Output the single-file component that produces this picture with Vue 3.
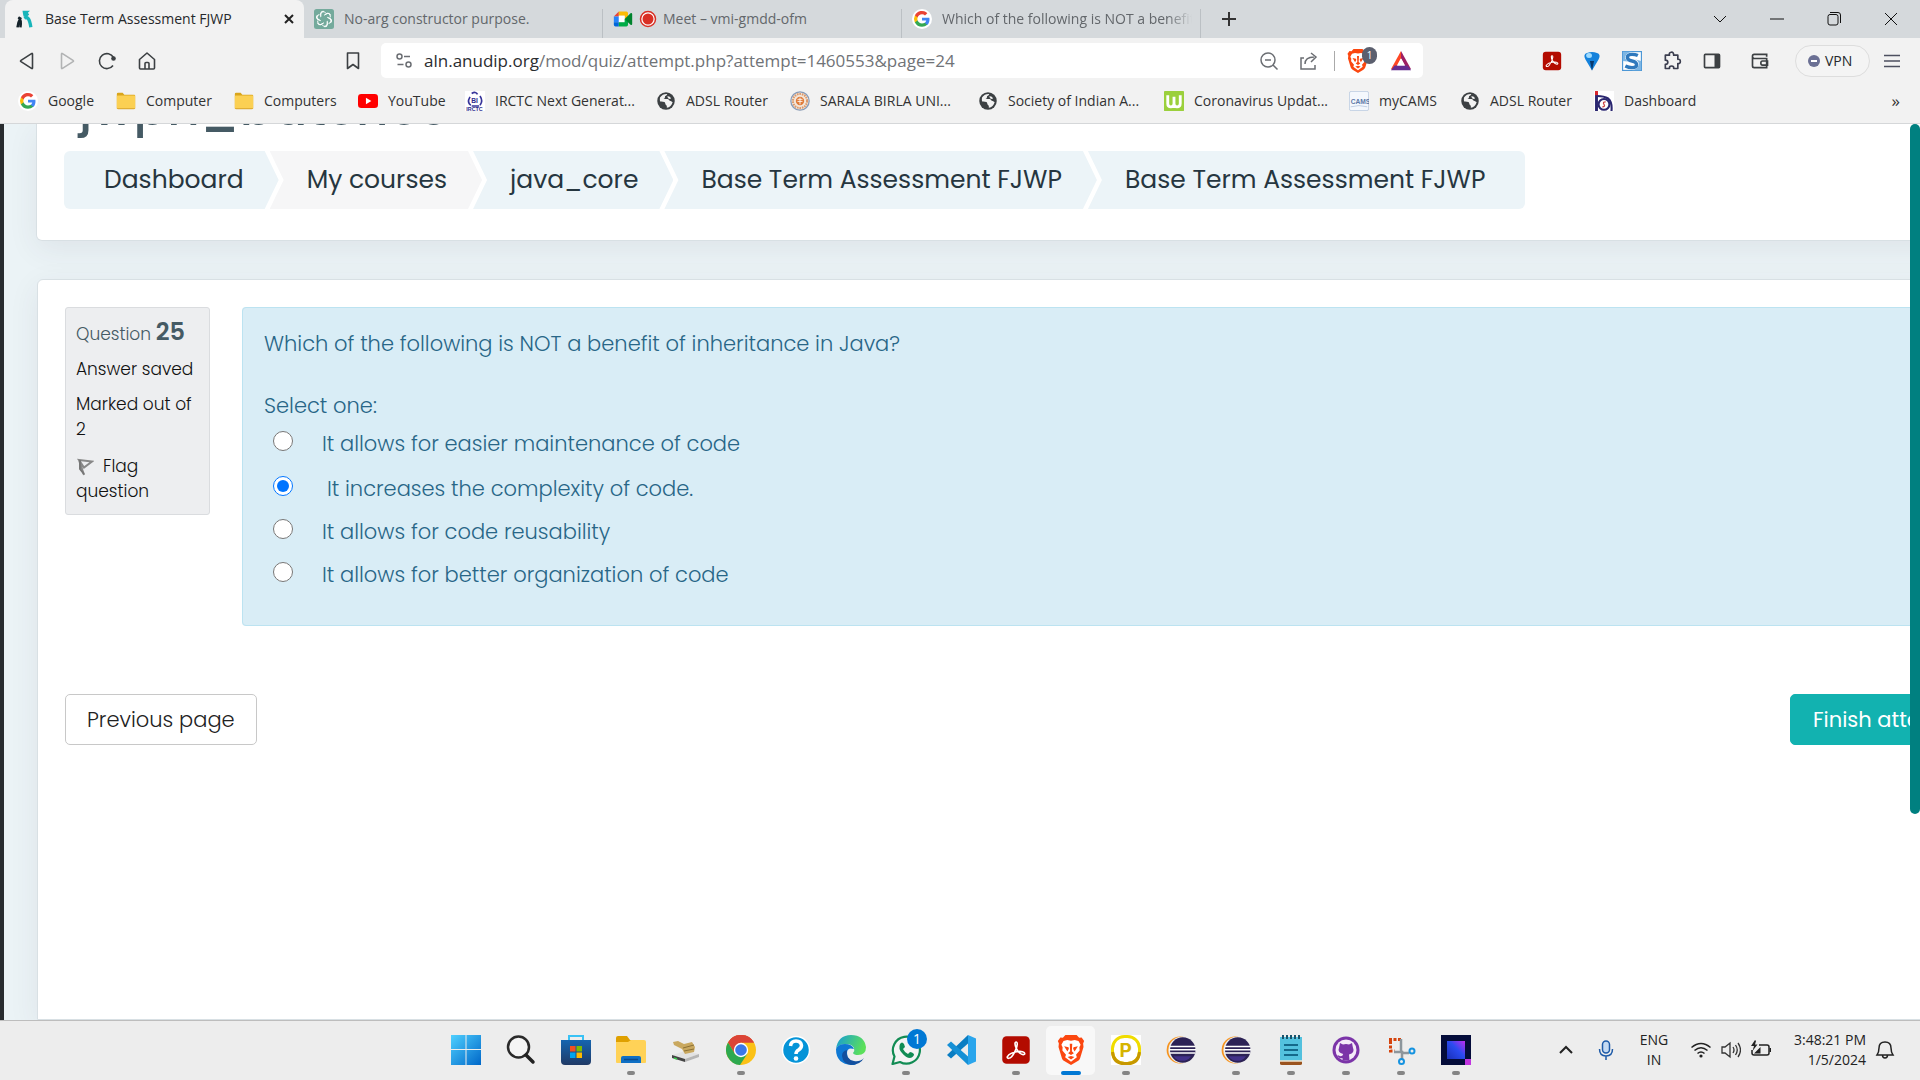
<script setup>
import { ref } from 'vue'

const google = '<circle cx="12" cy="12" r="12" fill="#fff"/><path d="M21 12.2c0-.7-.1-1.2-.2-1.8H12v3.500h5.100c-.2 1.200-.9 2.200-1.900 2.900v2.400h3.100C20.100 17.500 21 15.100 21 12.200z" fill="#4285f4"/><path d="M12 21.300c2.600 0 4.700-.9 6.300-2.300l-3.100-2.400c-.8.6-1.900.9-3.200.9-2.500 0-4.600-1.700-5.300-3.900H3.500v2.500C5 19.200 8.300 21.300 12 21.300z" fill="#34a853"/><path d="M6.700 13.600a5.600 5.600 0 0 1 0-3.500V7.600H3.500a9.400 9.400 0 0 0 0 8.500z" fill="#fbbc05"/><path d="M12 6.300c1.400 0 2.700.5 3.600 1.400l2.800-2.700A9.400 9.400 0 0 0 3.500 7.600l3.200 2.500C7.400 7.900 9.500 6.300 12 6.300z" fill="#ea4335"/>'
const folder = '<path d="M1 3.500Q1 2 2.500 2H8l2 2.500h12q1 0 1 1V21H1z" fill="#d9a51c"/><path d="M1 6.500Q1 5.500 2 5.500h20q1 0 1 1v13.500q0 1.500-1.500 1.500h-19Q1 21.500 1 20z" fill="#fbd053"/><path d="M1 20.500h22q-.3 1.500-1.800 1.500H2.800Q1.200 22 1 20.500z" fill="#e0ae35"/>'
const globe = '<circle cx="12" cy="12" r="10.500" fill="#3c4043"/><path d="M5 7.500C7 4.500 10 3.200 13.500 3.500c-.5 1.500-1 2-2.500 2.500-.5 2 0 3-2 3.500l5 .2c2 .3 1.500 2.300 3.500 2.300 1.500 0 1 1.500 2.500 1.200-1 4-3.500 6.300-7 7 0-2 .3-2.500-1-3.500s-.5-3-2-3.500-3-.7-5-.5C4.500 11 4.500 9 5 7.500z" fill="#f2f2f2"/><path d="M13.500 6.500c2-.5 3.500.5 4.500 2.500-1.500 1-3.500.5-4.500-2.500z" fill="#f2f2f2"/>'
const acrobat = '<rect x="1" y="1" width="22" height="22" rx="3.500" fill="#b30b00"/><path d="M5 17.500c1.500-2.500 6-4 9-4.300 2-.2 5 .2 5 1.600s-2.200 1.200-4-.4C13 12.800 11.200 9 11.200 7c0-1.900 1.900-1.900 1.800.3-.1 3-2.700 8-4.500 10.100-1.400 1.600-3.700 1.700-3.500.1z" fill="none" stroke="#fff" stroke-width="1.300"/>'
const brave = '<path d="M7.500 0h9l2 2.200 2-.2 2 2.800-.8 2L22 9.500l-2.600 8.600c-.3 1.200-1 2-2 2.600L12 24l-5.400-3.300c-1-.6-1.700-1.400-2-2.600L2 9.500l.3-2.700-.8-2L3.500 2l2 .2z" fill="#fb4710"/><path d="M12 4.500l3-.5 3 .8 1.700 3-1 2 .2 2.500-2.900 3.400.7 2L12 21.300l-4.700-3.600.7-2-2.900-3.400.2-2.500-1-2L6 4.800 9 4z" fill="#fff"/><path d="M6.500 9l3.500.8.3 1.200-1.200 2.200zM17.500 9l-3.500.8-.3 1.200 1.200 2.200zM11 7h2l-.3 6 1.600 1.500L12 16l-2.300-1.500 1.600-1.500zM9.300 17.500l2.700-.8 2.700.8-2.700 2z" fill="#fb4710"/>'
const eclipse = '<circle cx="11.300" cy="12" r="10.800" fill="#f7941e"/><circle cx="12.500" cy="12" r="10.600" fill="#ededed"/><circle cx="13.400" cy="12" r="10.200" fill="#2c2255"/><path d="M6 17a8.500 8.500 0 0 0 14 0z" fill="#423189"/><path d="M3.200 9.200h20.200M2.600 11.800h21.400M3.200 14.400h20.200" stroke="#fff" stroke-width="1.200"/>'
const knot = [0, 60, 120, 180, 240, 300].map(a => `<path d="M8 8V6.500q0-3 3-3.200 1.500 0 3 1.200M12 7.500l3.800-2.200q3-1 4 2" transform="rotate(${a} 12 12)"/>`).join('')

const tabs = [
  { title: 'Base Term Assessment FJWP', active: true, icon: '<path d="M4 10q4 3 2.500 12M7 10q-3 5-4 12" stroke="#15232b" stroke-width="3" fill="none"/><path d="M11 11q6-4 8 11" stroke="#18b5ba" stroke-width="4" fill="none"/><path d="M9 2h9l-2.500 2.500L17 7q-3 3-7 1z" fill="#18b5ba"/>' },
  { title: 'No-arg constructor purpose.', icon: '<rect width="24" height="24" rx="3" fill="#74aa9c"/><g fill="none" stroke="#fff" stroke-width="1.200">' + knot + '</g>' },
  { title: 'Meet – vmi-gmdd-ofm', recording: true, icon: '<path d="M1 9l6-6v6z" fill="#ea4335"/><path d="M7 3h9q2 0 2 2v7h-4V8H7z" fill="#fbbc04"/><path d="M1 9h6v7H1z" fill="#2684fc"/><path d="M1 16h6v5H3q-2 0-2-2z" fill="#0066da"/><path d="M7 8h7v8H7z" fill="#fff"/><path d="M7 16h7v-4h4v7q0 2-2 2H7z" fill="#00ac47"/><path d="M14 12l7-7q2-.8 2 1v12q0 1.800-2 1z" fill="#00832d"/>' },
  { title: 'Which of the following is NOT a benefit of inheritance in Java?', fade: true, icon: google }
]

const bookmarks = [
  { label: 'Google', width: 98, icon: google },
  { label: 'Computer', width: 118, icon: folder },
  { label: 'Computers', width: 124, icon: folder },
  { label: 'YouTube', width: 107, icon: '<rect y="3.500" width="24" height="17" rx="4" fill="#f00"/><path d="M9.500 8v8l6.500-4z" fill="#fff"/>' },
  { label: 'IRCTC Next Generat...', width: 191, icon: '<rect width="24" height="24" fill="#fff"/><path d="M8 3q5-3 7 1M6 7q-4 7 1 10M18 6q4 6 0 11M8 18h9" stroke="#37349a" stroke-width="2" fill="none"/><text x="7.500" y="14" font-size="8" font-weight="700" font-family="Liberation Sans" fill="#2c2a8c">BI</text><text x="1.500" y="23.500" font-size="6.500" font-weight="700" font-family="Liberation Sans" fill="#2c2a8c">IRCTC</text>' },
  { label: 'ADSL Router', width: 134, icon: globe },
  { label: 'SARALA BIRLA UNI...', width: 188, icon: '<circle cx="12" cy="12" r="11" fill="#f2e7dc" stroke="#879bb8" stroke-width="1.500"/><circle cx="12" cy="12" r="8.500" fill="none" stroke="#dd9a6c" stroke-width="2.500" stroke-dasharray="2 1"/><circle cx="12" cy="12" r="5" fill="#e07b39"/><path d="M9 10h6M9 12.500h6M12 8v8" stroke="#fff" stroke-width="1"/>' },
  { label: 'Society of Indian A...', width: 186, icon: globe },
  { label: 'Coronavirus Updat...', width: 185, icon: '<rect width="24" height="24" rx="1" fill="#9bd03c"/><path d="M4.500 5v10q0 4 3.700 4T12 15V7v8q0 4 3.700 4t3.800-4V5" fill="none" stroke="#fff" stroke-width="3.400"/>' },
  { label: 'myCAMS', width: 111, icon: '<rect x=".5" y=".5" width="23" height="23" rx="2" fill="#f4f8fd" stroke="#bccbe0"/><text x="2" y="16" font-size="8" font-weight="700" font-family="Liberation Sans" fill="#5d79a8">CAMS</text><path d="M2 19q10-3 20 0" stroke="#b8c8e0" fill="none"/>' },
  { label: 'ADSL Router', width: 134, icon: globe },
  { label: 'Dashboard', width: 130, icon: '<rect width="24" height="24" fill="#fff"/><path d="M3 2v22" stroke="#2a2670" stroke-width="3.500"/><path d="M3 0v5" stroke="#d8232a" stroke-width="3.500"/><path d="M4 6q8 0 13 3 5 4 4 15" fill="none" stroke="#2a2670" stroke-width="2.500"/><circle cx="12" cy="16" r="6.500" fill="none" stroke="#2a2670" stroke-width="2.500"/><path d="M14 13q-4 0-2 3t-2 3" stroke="#c44" stroke-width="1.500" fill="none"/>' }
]

const extensions = [
  { name: 'Acrobat', icon: acrobat },
  { name: 'Balloon', icon: '<path d="M12 23.500L4 10Q1 4 6 2.500q6-2.500 12 0 5 1.500 2 7.500z" fill="#1482dc"/><path d="M12 23.500L9.500 12h5z" fill="#06386e"/><ellipse cx="8.500" cy="5.500" rx="3.500" ry="3" fill="#9fdcff"/>' },
  { name: 'Scribe', icon: '<rect x=".7" y=".7" width="22.600" height="22.600" fill="#fff" stroke="#4c97d6" stroke-width="1.400"/><path d="M23 12v11H12q9-2 8-9-1-3-5-4zM1 12V1h11Q3 3 4 9q1 3 5 4z" fill="#7db6e4"/><path d="M19 5.500Q16 4 12 4 6.500 4 6.500 7.500T12 12t5.500 4.500T12 20q-4 0-8-2" stroke="#2f79bd" stroke-width="4" fill="none"/>' },
  { name: 'Extensions', icon: '<path d="M5 5h4q-1-3 2-3.500T14 5h5v5q3-.5 3 2.500T19 15v6h-5q.5-3-2.500-3T9 21H4v-5q3 0 3-2.500T4 11V5z" fill="none" stroke="#3b3e4f" stroke-width="2" stroke-linejoin="round"/>' },
  { name: 'Sidebar', icon: '<rect x="3" y="4" width="18" height="16" rx="1" fill="none" stroke="#3c4043" stroke-width="2"/><path d="M15 4h6v16h-6z" fill="#3c4043"/>' },
  { name: 'Wallet', icon: '<path d="M20 7V4H5Q3 4 3 6v12q0 2 2 2h15V9H5Q3 9 3 7M21 12h-6q-2 0-2 2.500t2 2.500h6z" fill="none" stroke="#3c4043" stroke-width="2"/>' }
]

const crumbs = ['Dashboard', 'My courses', 'java_core', 'Base Term Assessment FJWP', 'Base Term Assessment FJWP']

const options = [
  'It allows for easier maintenance of code',
  'It increases the complexity of code.',
  'It allows for code reusability',
  'It allows for better organization of code'
]
const answer = ref(1)

const apps = [
  { name: 'Start', icon: '<defs><linearGradient id="win" x1="0" y1="0" x2="1" y2="1"><stop stop-color="#4fd0ff"/><stop offset="1" stop-color="#0067c8"/></linearGradient></defs><path d="M0 0h14.500v14H0zM15.500 0H30v14H15.500zM0 15h14.500v15H0zM15.500 15H30v15H15.500z" fill="url(#win)"/>' },
  { name: 'Search', icon: '<circle cx="12.500" cy="12" r="10.500" fill="#f5f5f5" stroke="#2a2a2a" stroke-width="2.500"/><path d="M20 20l7 7" stroke="#222" stroke-width="3.500" stroke-linecap="round"/>' },
  { name: 'Microsoft Store', icon: '<defs><linearGradient id="st" x1="0" y1="0" x2="0" y2="1"><stop stop-color="#1565b0"/><stop offset="1" stop-color="#203a66"/></linearGradient></defs><path d="M8 6V1h14v5" fill="none" stroke="#39c2f5" stroke-width="2"/><path d="M0 5h30v21q0 4-4 4H4q-4 0-4-4z" fill="url(#st)"/><path d="M9 11h5.500v5.500H9z" fill="#f25022"/><path d="M15.500 11H21v5.500h-5.500z" fill="#7fba00"/><path d="M9 17.500h5.500V23H9z" fill="#00a4ef"/><path d="M15.500 17.500H21V23h-5.500z" fill="#ffb900"/>' },
  { name: 'File Explorer', running: true, icon: '<path d="M0 3q0-2 2-2h9l3 4h14v5H0z" fill="#dfa000"/><path d="M0 7h12l3-2h13q2 0 2 2v20q0 1-1 1H1q-1 0-1-1z" fill="#ffd257"/><path d="M5 28v-5q0-2 2-2h16q2 0 2 2v5z" fill="#0f6fc4"/><path d="M8 24.500h14" stroke="#0a4a8c" stroke-width="1.500"/>' },
  { name: 'Disk Tool', icon: '<path d="M1 20l13-4 14 3-14 5z" fill="#e2e2e2"/><path d="M1 20l13 4v3L1 23z" fill="#444"/><path d="M14 24l14-5v3l-14 5z" fill="#b5b5b5"/><path d="M3 23l3 1" stroke="#35c948" stroke-width="1.500"/><path d="M2 7l5-1 6 3 8-2 3 5-1 5-9 2-3-5-8-4z" fill="#c9a85f"/><path d="M12 13l11-3M13 16l10-2" stroke="#8c7135" stroke-width="1"/>' },
  { name: 'Chrome', running: true, icon: '<circle cx="15" cy="15" r="15" fill="#fbc116"/><path d="M2 7.500A15 15 0 0 1 28 7.500H15z" fill="#db4437"/><path d="M2 7.500a15 15 0 0 1 26 0H15L9 19z" fill="#db4437"/><path d="M2 7.500A15 15 0 0 0 14 30l7.500-11.500L9 19z" fill="#2da94f"/><circle cx="15" cy="15" r="7.200" fill="#fff"/><circle cx="15" cy="15" r="5.800" fill="#3b78e7"/>' },
  { name: 'Get Help', icon: '<circle cx="15" cy="15" r="13.500" fill="#0594d8" stroke="#fff" stroke-width="1.500"/><path d="M9.500 11q.5-5 5.500-5t5.500 4.500q0 2.500-3 4.500-2.500 1.500-2.500 4" stroke="#fff" stroke-width="3.500" fill="none"/><circle cx="15" cy="23.500" r="2.300" fill="#fff"/>' },
  { name: 'Edge', icon: '<defs><linearGradient id="ed" x1="0" y1="0" x2="1" y2=".3"><stop stop-color="#159bd8"/><stop offset="1" stop-color="#5be05a"/></linearGradient></defs><path d="M0 14Q2 0 15 0t15 12q0 8-8 8-4 0-5-2 2-2 1-5-2-4-8-4-8 0-10 5z" fill="url(#ed)"/><path d="M0 14q2-5 9-5 7 0 9 5-7-2-7 4 0 8 9 12Q0 31 0 14z" fill="#0e78d4"/><path d="M11 15q-2 9 7 11 6 1 10-3-4 7-13 7-8-1-9-9 0-5 5-6z" fill="#124f9e"/>' },
  { name: 'WhatsApp', running: true, badge: '1', icon: '<path d="M1.500 29l2-7.500A13.500 13.500 0 1 1 9 27z" fill="#f4f4f4" stroke="#128c54" stroke-width="2.200" stroke-linejoin="round"/><path d="M9 9q2-3 4 0l1 3-2 2q2 4 5 5l2-2q2 0 4 2 0 3-4 4-4 0-8-5-4-4-2-9z" fill="#128c54"/>' },
  { name: 'Visual Studio Code', icon: '<path d="M22 0l8 3.500v23L22 30z" fill="#2aa5ec"/><path d="M22 0v8.500L5 23.500 1 20z" fill="#0a7dc2"/><path d="M22 30v-8.500L5 6.500 1 10z" fill="#1590d6"/>' },
  { name: 'Acrobat', running: true, icon: acrobat, box: 24 },
  { name: 'Brave', active: true, icon: brave, box: 24 },
  { name: 'P', running: true, icon: '<rect width="30" height="30" fill="#fff"/><rect x="1.500" y="1.500" width="27" height="27" rx="12" fill="#fff" stroke="#f0dc00" stroke-width="3"/><path d="M1.500 17q1 11.500 12 11.500h3q11 0 12-11.500" stroke="#c79800" stroke-width="3" fill="none"/><text x="8.500" y="22" font-size="19" font-weight="700" font-family="Inter" fill="#d6b400">P</text>' },
  { name: 'Eclipse', icon: eclipse, box: 24 },
  { name: 'Eclipse Workspace', running: true, icon: eclipse, box: 24 },
  { name: 'Notepad', running: true, icon: '<path d="M4 2h22v24H4z" fill="#53c1de"/><path d="M4 26h22v2.500q0 1.500-2 1.500H6q-2 0-2-1.500z" fill="#9a531e"/><path d="M4 26h22" stroke="#f3e6d2" stroke-width="1.500"/><path d="M7 0v4M11 0v4M15 0v4M19 0v4M23 0v4" stroke="#17536b" stroke-width="2"/><path d="M8 10h14M8 15h14M8 20h14" stroke="#14688a" stroke-width="2"/>' },
  { name: 'GitHub', running: true, icon: '<circle cx="15" cy="15" r="13.500" fill="#7b34a8"/><circle cx="15" cy="15" r="10.500" fill="#f4eaf8"/><path d="M9 8l3 1.500q3-.8 6 0L21 8l.8 4q2.500 6-3.800 7.500l.5 6h-7V23q-4 1-5-3 3 2 5 .5l.7-1.500Q6 17.500 8.200 12z" fill="#7b34a8"/>' },
  { name: 'Snipping Tool', running: true, icon: '<path d="M3 4.500h12M4.500 6v10h4" stroke="#d5430c" stroke-width="3" stroke-dasharray="3 1.500" fill="none"/><path d="M15 4v11q0 3 3 3h5M8 17h8V24" stroke="#8d969c" stroke-width="2.500" fill="none"/><circle cx="26" cy="16" r="2.500" fill="none" stroke="#1593e0" stroke-width="2"/><circle cx="15.500" cy="26.500" r="2.500" fill="none" stroke="#1593e0" stroke-width="2"/>' },
  { name: 'Media', running: true, icon: '<defs><linearGradient id="md" x1="1" y1="0" x2="0" y2="1"><stop stop-color="#c02cf0"/><stop offset=".45" stop-color="#2a4bf0"/><stop offset="1" stop-color="#1a2fb8"/></linearGradient></defs><path d="M0 0h30v30H0z" fill="#040c3a"/><path d="M6 6h18v18H6z" fill="url(#md)"/><path d="M24 24h6v6h-6z" fill="#c135e0"/>' }
]
</script>

<template>
  <div class="desktop">
    <header class="browser">
      <div class="tabstrip">
        <div v-for="t in tabs" :key="t.title" class="tab" :class="{ active: t.active, recording: t.recording }">
          <svg class="i20" viewBox="0 0 24 24" v-html="t.icon" />
          <svg v-if="t.recording" class="i18" viewBox="0 0 18 18"><circle cx="9" cy="9" r="7.500" fill="#fff" stroke="#d93025" stroke-width="1.500" /><circle cx="9" cy="9" r="5.500" fill="#d93025" /></svg>
          <span class="tab-title" :class="{ fade: t.fade }">{{ t.title }}</span>
          <button v-if="t.active" class="plain" aria-label="Close tab"><svg class="i12" viewBox="0 0 12 12"><path d="M2 2l8 8M10 2l-8 8" stroke="#222" stroke-width="2" /></svg></button>
        </div>
        <button class="plain new-tab" aria-label="New tab"><svg class="i16" viewBox="0 0 16 16"><path d="M8 1v14M1 8h14" stroke="#333" stroke-width="2" /></svg></button>
        <div class="window-buttons">
          <button class="plain" aria-label="Search tabs"><svg class="i16" viewBox="0 0 16 16"><path d="M2 5l6 6 6-6" class="line" /></svg></button>
          <button class="plain" aria-label="Minimize"><svg class="i16" viewBox="0 0 16 16"><path d="M1 8h14" class="line" /></svg></button>
          <button class="plain" aria-label="Restore"><svg class="i16" viewBox="0 0 16 16"><rect x="2" y="3.500" width="10" height="10.500" rx="2" class="line" /><path d="M4 1.500h8q2.500 0 2.500 2.500v8" class="line" /></svg></button>
          <button class="plain" aria-label="Close"><svg class="i16" viewBox="0 0 16 16"><path d="M2 2l12 12M14 2L2 14" class="line" /></svg></button>
        </div>
      </div>

      <div class="toolbar">
        <div class="nav">
          <button class="plain" aria-label="Back"><svg class="i20" viewBox="0 0 20 20"><path d="M15.500 3v14q0 1-1 .4L4 10.700q-1-.7 0-1.400L14.500 2.600q1-.6 1 .4z" class="tool" /></svg></button>
          <button class="plain dim" aria-label="Forward"><svg class="i20" viewBox="0 0 20 20"><path d="M4.500 3v14q0 1 1 .4L16 10.700q1-.7 0-1.400L5.500 2.600q-1-.6-1 .4z" class="tool" /></svg></button>
          <button class="plain" aria-label="Reload"><svg class="i20" viewBox="0 0 20 20"><path d="M16.500 6.500A7.500 7.500 0 1 0 16 14.500" class="tool" /><circle cx="16.500" cy="7.500" r="2.300" fill="#3c4043" /></svg></button>
          <button class="plain" aria-label="Home"><svg class="i20" viewBox="0 0 20 20"><path d="M2.500 8.500L10 2l7.500 6.500V17q0 1-1 1h-13q-1 0-1-1zM8 18v-5.500q0-1 1-1h2q1 0 1 1V18" class="tool" /></svg></button>
        </div>
        <button class="plain save" aria-label="Bookmark"><svg class="i20" viewBox="0 0 20 20"><path d="M4.500 2h11v15.500L10 13.500l-5.500 4z" class="tool" /></svg></button>
        <div class="address">
          <svg class="i18" viewBox="0 0 18 18"><g class="grey"><circle cx="4.500" cy="4.500" r="2.500" /><path d="M9 4.500h6M2.500 12.500h6" /><circle cx="13.500" cy="12.500" r="2.500" /></g></svg>
          <a class="url" href="#"><b>aln.anudip.org</b>/mod/quiz/attempt.php?attempt=1460553&amp;page=24</a>
          <svg class="i20" viewBox="0 0 20 20"><g class="grey"><circle cx="9" cy="9" r="7" /><path d="M6 9h6M14 14l4.500 4.500" /></g></svg>
          <svg class="i20 share" viewBox="0 0 20 20"><g class="grey"><path d="M5 7H2v11h14v-4M6 13q0-7 9-7M12 2l5 4-5 5" /></g></svg>
          <span class="divider"></span>
          <span class="shield"><svg class="i24" viewBox="0 0 24 24" v-html="brave" /><span class="shield-count">1</span></span>
          <svg class="i22" viewBox="0 0 24 24"><path d="M12 1L1 21l5 0 6-12z" fill="#ff4724" /><path d="M12 1l11 20h-5L12 9z" fill="#9e1f63" /><path d="M1 22l4-5h14l4 5z" fill="#662d91" /><path d="M12 9l4.500 8h-9z" fill="#fff" /></svg>
        </div>
        <div class="extensions">
          <button v-for="e in extensions" :key="e.name" class="plain" :aria-label="e.name"><svg class="i20" viewBox="0 0 24 24" v-html="e.icon" /></button>
        </div>
        <button class="vpn"><svg class="i12" viewBox="0 0 12 12"><circle cx="6" cy="6" r="6" fill="#6b7094" /><path d="M3 6h6" stroke="#fff" stroke-width="2" /></svg>VPN</button>
        <button class="plain menu" aria-label="Menu"><svg class="i16" viewBox="0 0 16 16"><path d="M0 2.500h16M0 8h16M0 13.500h16" stroke="#4d5060" stroke-width="1.500" /></svg></button>
      </div>

      <nav class="bookmarks">
        <a v-for="(b, i) in bookmarks" :key="i" href="#" :style="{ width: b.width + 'px' }"><svg class="i20" viewBox="0 0 24 24" v-html="b.icon" />{{ b.label }}</a>
        <button class="plain more" aria-label="More bookmarks">»</button>
      </nav>
    </header>

    <main class="page">
      <div class="content">
        <section class="card heading">
          <h1>jwph_batches</h1>
          <nav class="crumbs">
            <a v-for="(c, i) in crumbs" :key="i" href="#">{{ c }}</a>
          </nav>
        </section>

        <section class="card quiz">
          <div class="question">
            <aside class="info">
              <h3>Question <b>25</b></h3>
              <p>Answer saved</p>
              <p>Marked out of 2</p>
              <a href="#"><svg class="i18" viewBox="0 0 18 18"><path d="M3 2l5 15M3 2l13 1.500-8 6z" fill="none" stroke="#888" stroke-width="2" /><path d="M4 2v9l4 5" stroke="#777" stroke-width="2" fill="none" /></svg>Flag question</a>
            </aside>
            <fieldset class="formulation">
              <p class="prompt">Which of the following is NOT a benefit of inheritance in Java?</p>
              <p>Select one:</p>
              <label v-for="(o, i) in options" :key="o" class="option" :class="{ chosen: i === 1 }">
                <input v-model="answer" type="radio" name="answer" :value="i" /><span>{{ o }}</span>
              </label>
            </fieldset>
          </div>
          <div class="actions">
            <button class="btn">Previous page</button>
            <button class="btn primary">Finish attempt ...</button>
          </div>
        </section>
      </div>
      <div class="scrollbar"></div>
    </main>

    <footer class="taskbar">
      <div class="apps">
        <button v-for="a in apps" :key="a.name" class="app" :class="{ running: a.running, current: a.active }" :aria-label="a.name">
          <svg class="i30" :viewBox="`0 0 ${a.box || 30} ${a.box || 30}`" v-html="a.icon" />
          <span v-if="a.badge" class="badge">{{ a.badge }}</span>
        </button>
      </div>
      <div class="tray">
        <svg class="i16 up" viewBox="0 0 16 16"><path d="M2 11l6-6 6 6" fill="none" stroke="#222" stroke-width="2" /></svg>
        <svg class="i20 mic" viewBox="0 0 20 20"><g fill="none" stroke="#1d5aa8" stroke-width="1.500"><rect x="6.500" y="1" width="7" height="12" rx="3.500" fill="#c4daf3" /><path d="M3.500 9q0 7 6.500 7t6.500-7M10 16v4" /></g></svg>
        <div class="lang">ENG<br />IN</div>
        <svg class="i20 wifi" viewBox="0 0 20 20"><path d="M.5 7.500q9.500-8 19 0M3.500 10.500q6.500-5.500 13 0M6.500 13.500q3.500-3 7 0" fill="none" stroke="#222" stroke-width="1.500" /><circle cx="10" cy="16" r="1.600" fill="#222" /></svg>
        <svg class="i20" viewBox="0 0 20 20"><path d="M1 7h3l5-4v14l-5-4H1zM12 7q2 3 0 6M14.500 5q3.500 5 0 10M17 3q5 7 0 14" fill="none" stroke="#333" stroke-width="1.300" /></svg>
        <svg class="i20" viewBox="0 0 20 20"><path d="M8 5h8q2 0 2 2v6q0 2-2 2H3q-2 0-2-2v-3" fill="none" stroke="#222" stroke-width="1.500" /><path d="M18.500 8h1.500v4h-1.500zM3 13.500h6.500V7zM4 0L0 6h3L1.500 11l5-6.500H4L5 1z" fill="#222" /></svg>
        <div class="clock">3:48:21 PM<br />1/5/2024</div>
        <svg class="i20" viewBox="0 0 20 20"><path d="M2 15q2-3 2-7 0-6 6-6t6 6q0 4 2 7zM7.500 15q0 3 2.500 3t2.500-3" fill="none" stroke="#222" stroke-width="1.500" /></svg>
      </div>
    </footer>
  </div>
</template>

<style>
body {
  margin: 0;
  overflow: hidden;
}
</style>

<style scoped>
* {
  box-sizing: border-box;
}
.desktop {
  display: flex;
  flex-direction: column;
  height: 100vh;
  overflow: hidden;
  font: 14px/20px "Segoe UI", "Open Sans", sans-serif;
  color: #333;
}
svg { display: block; flex: none; }
a { color: inherit; text-decoration: none; }
.i12 { width: 12px; height: 12px; }
.i16 { width: 16px; height: 16px; }
.i18 { width: 18px; height: 18px; }
.i20 { width: 20px; height: 20px; }
.i22 { width: 22px; height: 22px; }
.i24 { width: 24px; height: 24px; }
.i30 { width: 30px; height: 30px; }
.line { fill: none; stroke: #111; stroke-width: 1; }
.tool { fill: none; stroke: #3c4043; stroke-width: 1.6; stroke-linejoin: round; }
.grey { fill: none; stroke: #6b6e73; stroke-width: 1.5; }
.dim { opacity: 0.35; }
.plain {
  display: flex;
  padding: 0;
  border: 0;
  background: none;
  font: inherit;
  color: inherit;
}

.browser {
  position: relative;
  z-index: 1;
  flex: none;
  background: #f2f2f2;
  border-bottom: 1px solid #d5d7d9;
}
.tabstrip {
  display: flex;
  align-items: center;
  height: 38px;
  padding-left: 5px;
  background: #d5d9dc;
}
.tab {
  display: flex;
  align-items: center;
  gap: 10px;
  width: 299px;
  height: 100%;
  padding: 0 9px 0 10px;
  color: #63676b;
  background: linear-gradient(#bbc0c4, #bbc0c4) right bottom / 1px 29px no-repeat;
}
.tab.recording { gap: 6px; }
.tab.active {
  color: #26282b;
  background: #f2f2f2;
  border-radius: 8px 8px 0 0;
}
.tab-title {
  flex: 1;
  overflow: hidden;
  white-space: nowrap;
}
.tab-title.fade {
  mask-image: linear-gradient(to right, #000 90%, transparent);
}
.new-tab { margin-left: 20px; }
.window-buttons {
  display: flex;
  gap: 41px;
  margin-left: auto;
  padding-right: 21px;
}

.toolbar {
  display: flex;
  align-items: center;
  height: 45px;
  padding: 0 20px 0 17px;
}
.nav { display: flex; gap: 20px; }
.save { margin-left: 186px; }
.address {
  display: flex;
  flex: 1;
  align-items: center;
  height: 35px;
  margin-left: 18px;
  padding: 0 11px 0 14px;
  background: #fff;
  border-radius: 5px;
}
.url {
  flex: 1;
  margin-left: 11px;
  font-size: 17px;
  color: #707377;
}
.url b { font-weight: 400; color: #2b2d30; }
.share { margin: 0 15px 0 20px; }
.divider { width: 1px; height: 20px; background: #aaa; }
.shield { position: relative; margin: 0 20px 0 11px; }
.shield-count {
  position: absolute;
  top: -2px;
  right: -7px;
  width: 15px;
  border-radius: 8px;
  background: #5b5f6e;
  color: #fff;
  font-size: 10px;
  line-height: 17px;
  text-align: center;
}
.extensions { display: flex; gap: 20px; margin-left: 119px; }
.extensions button:last-child { margin-left: 8px; }
.vpn {
  display: flex;
  align-items: center;
  gap: 5px;
  width: 75px;
  height: 32px;
  margin-left: 25px;
  padding: 0 12px;
  border: 1px solid #ddd;
  border-radius: 16px;
  background: #f4f4f4;
  font: inherit;
  color: #26282b;
}
.menu { margin-left: 14px; }

.bookmarks {
  display: flex;
  align-items: center;
  height: 40px;
  padding: 0 20px 4px 18px;
}
.bookmarks a {
  display: flex;
  align-items: center;
  gap: 10px;
  white-space: nowrap;
}
.more { margin-left: auto; font-size: 17px; }

.page {
  position: relative;
  flex: 1;
  min-height: 0;
  overflow: hidden;
  background: #ebf3f6;
  border-left: 4px solid #282c2f;
  font: 300 21px/32px Poppins, Inter, sans-serif;
  color: #111;
}
.content {
  display: flex;
  flex-direction: column;
  gap: 38px;
  height: 100%;
  margin: 0 -118px 0 32px;
}
.card {
  background: #fff;
  border: 1px solid #d8e0e4;
  box-shadow: 0 8px 30px rgba(60, 50, 80, 0.08);
}
.heading {
  border-top: 0;
  border-radius: 0 0 6px 6px;
  padding: 0 27px 31px;
}
h1 {
  margin: -36px 0 23px 15px;
  font-size: 50px;
  font-weight: 500;
  line-height: 40px;
  color: #455a64;
}
.crumbs { display: flex; }
.crumbs a {
  height: 58px;
  padding: 0 35px 0 37px;
  background: #ecf4f8;
  color: #263640;
  font-size: 25px;
  font-weight: 400;
  line-height: 58px;
  white-space: nowrap;
  clip-path: polygon(0 0, calc(100% - 14px) 0, 100% 50%, calc(100% - 14px) 100%, 0 100%, 14px 50%);
}
.crumbs a + a { margin-left: -9px; }
.crumbs a:nth-child(2) { background: #f6f6f7; }
.crumbs a:first-child {
  padding-left: 40px;
  clip-path: polygon(0 0, calc(100% - 14px) 0, 100% 50%, calc(100% - 14px) 100%, 0 100%);
  border-radius: 6px 0 0 6px;
}
.crumbs a:last-child {
  padding-right: 40px;
  clip-path: polygon(0 0, 100% 0, 100% 100%, 0 100%, 14px 50%);
  border-radius: 0 6px 6px 0;
}
.quiz {
  flex: 1;
  border-radius: 6px 6px 0 0;
  padding: 27px;
  margin-left: 1px;
}
.question {
  display: flex;
  align-items: flex-start;
  gap: 32px;
}
.info {
  flex: none;
  width: 145px;
  padding: 8px 10px 10px;
  background: #edeef0;
  border: 1px solid #dadcdf;
  border-radius: 3px;
  font-size: 17px;
  line-height: 25px;
}
.info h3 {
  margin: 0 0 7px;
  font-size: 17px;
  font-weight: 300;
  line-height: 32px;
  color: #455a64;
}
.info h3 b { font-size: 24px; font-weight: 600; }
.info p { margin: 0 0 10px; }
.info a { display: block; margin-top: 12px; }
.info svg { display: inline-block; margin-right: 9px; vertical-align: -4px; }
.formulation {
  flex: 1;
  min-width: 0;
  margin: 0;
  padding: 20px 21px 29px;
  background: #d9edf6;
  border: 1px solid #bce3f1;
  border-radius: 4px;
  color: #286687;
}
.formulation p { margin: 0; }
.formulation .prompt { margin-bottom: 30px; }
.option {
  display: flex;
  align-items: center;
  gap: 29px;
  height: 43px;
}
.option.chosen { margin-top: 2px; }
.chosen span { padding-left: 5px; }
.option input {
  width: 20px;
  height: 20px;
  margin: 0 0 6px 9px;
  accent-color: #0075ff;
}
.actions {
  display: flex;
  justify-content: space-between;
  margin-top: 68px;
}
.btn {
  height: 51px;
  padding: 0 21px;
  border: 1px solid #c8c8c8;
  border-radius: 5px;
  background: #fff;
  color: #222;
  font: inherit;
  white-space: nowrap;
}
.btn.primary {
  width: 220px;
  padding-left: 22px;
  border-color: #12b2b0;
  background: #12b2b0;
  color: #fff;
  font-weight: 400;
  text-align: left;
}
.scrollbar {
  position: absolute;
  top: 0;
  right: 0;
  width: 10px;
  height: 77%;
  border-radius: 5px;
  background: #008080;
}

.taskbar {
  display: flex;
  flex: none;
  justify-content: space-between;
  height: 60px;
  border-top: 1px solid #bdbdbd;
  background: #ededed;
}
.apps { display: flex; margin: 5px 0 0 438px; }
.app {
  position: relative;
  display: flex;
  justify-content: center;
  width: 49px;
  height: 49px;
  margin: 0 3px;
  padding: 9px 0 0;
  border: 0;
  border-radius: 5px;
  background: none;
}
.app.current { background: #f8f8f8; }
.running::after,
.current::after {
  content: "";
  position: absolute;
  bottom: 0;
  width: 8px;
  height: 4px;
  border-radius: 2px;
  background: #858585;
}
.current::after { width: 20px; background: #0078d4; }
.badge {
  position: absolute;
  top: 3px;
  right: 3px;
  width: 20px;
  height: 20px;
  border-radius: 50%;
  background: #0078d4;
  color: #fff;
  font: 14px/20px "Open Sans", sans-serif;
}
.tray {
  display: flex;
  align-items: center;
  gap: 10px;
  padding: 0 25px 2px 0;
  color: #222;
}
.lang { width: 34px; text-align: center; }
.up { margin-right: 12px; }
.mic { margin-right: 11px; }
.wifi { margin-left: 10px; }
.clock { width: 85px; text-align: right; margin-right: -1px; }
</style>
